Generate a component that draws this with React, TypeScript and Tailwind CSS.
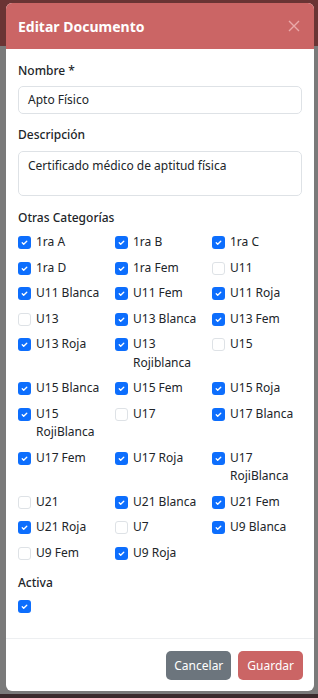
import React from 'react';

type Category = { label: string; checked: boolean };

const categories: Category[] = [
  { label: '1ra A', checked: true },
  { label: '1ra B', checked: true },
  { label: '1ra C', checked: true },
  { label: '1ra D', checked: true },
  { label: '1ra Fem', checked: true },
  { label: 'U11', checked: false },
  { label: 'U11 Blanca', checked: true },
  { label: 'U11 Fem', checked: true },
  { label: 'U11 Roja', checked: true },
  { label: 'U13', checked: false },
  { label: 'U13 Blanca', checked: true },
  { label: 'U13 Fem', checked: true },
  { label: 'U13 Roja', checked: true },
  { label: 'U13 Rojiblanca', checked: true },
  { label: 'U15', checked: false },
  { label: 'U15 Blanca', checked: true },
  { label: 'U15 Fem', checked: true },
  { label: 'U15 Roja', checked: true },
  { label: 'U15 RojiBlanca', checked: true },
  { label: 'U17', checked: false },
  { label: 'U17 Blanca', checked: true },
  { label: 'U17 Fem', checked: true },
  { label: 'U17 Roja', checked: true },
  { label: 'U17 RojiBlanca', checked: true },
  { label: 'U21', checked: false },
  { label: 'U21 Blanca', checked: true },
  { label: 'U21 Fem', checked: true },
  { label: 'U21 Roja', checked: true },
  { label: 'U7', checked: false },
  { label: 'U9 Blanca', checked: true },
  { label: 'U9 Fem', checked: false },
  { label: 'U9 Roja', checked: true },
];

const Check: React.FC<{ checked: boolean }> = ({ checked }) =>
  checked ? (
    <span className="mt-[3px] flex h-[13px] w-[13px] shrink-0 items-center justify-center rounded-[3px] bg-[#0d6efd]">
      <svg width="9" height="9" viewBox="0 0 20 20" fill="none">
        <path d="M5 10.5l3.2 3.2L15 7" stroke="#fff" strokeWidth="3" strokeLinecap="round" strokeLinejoin="round" />
      </svg>
    </span>
  ) : (
    <span className="mt-[3px] h-[13px] w-[13px] shrink-0 rounded-[3px] border border-[#dee2e6] bg-white" />
  );

export default function App() {
  return (
    <div
      className="relative flex h-[698px] w-[318px] flex-col bg-[#7a7a7a] text-[12px] text-[#212529]"
      style={{ fontFamily: '"Noto Sans", "Open Sans", sans-serif' }}
    >
      <div className="h-[46px] bg-[#6a3434]" />
      <div className="flex-1" />
      <div className="h-[4px] bg-[#3a2a2c]" />

      <div className="absolute left-[6px] top-[3px] w-[308px] overflow-hidden rounded-[6px] bg-white">
        <div className="flex h-[46px] items-center justify-between bg-[#cb6565] pl-[12px] pr-[12px]">
          <h2 className="text-[14px] font-bold text-white">Editar Documento</h2>
          <svg width="12" height="12" viewBox="0 0 12 12" className="mr-[2px]">
            <path d="M1 1l10 10M11 1L1 11" stroke="#eaa9a9" strokeWidth="1.4" />
          </svg>
        </div>

        <div className="px-[12px] pb-[17px] pt-[12px]">
          <label className="block leading-[20px] font-medium">Nombre *</label>
          <div className="mt-[5px] flex h-[28px] items-center rounded-[5px] border border-[#dee2e6] px-[9px]">
            Apto Físico
          </div>

          <label className="mt-[11px] block leading-[20px] font-medium">Descripción</label>
          <div className="mt-[6px] h-[45px] rounded-[5px] border border-[#dee2e6] px-[9px] pt-[4px] leading-[19px]">
            Certificado médico de aptitud física
          </div>

          <label className="mt-[12px] block leading-[20px] font-medium">Otras Categorías</label>
          <div className="mt-[5px] grid grid-cols-[97px_97px_1fr] gap-y-[7px]">
            {categories.map((c) => (
              <div key={c.label} className="flex gap-[5px] pr-[4px] leading-[18.5px]">
                <Check checked={c.checked} />
                <span>{c.label}</span>
              </div>
            ))}
          </div>

          <label className="mt-[11px] block leading-[20px] font-medium">Activa</label>
          <div className="mt-[4px] flex h-[24px]">
            <Check checked />
          </div>
        </div>

        <div className="flex justify-end gap-[7px] border-t border-[#edeff1] px-[11px] pb-[11px] pt-[12px]">
          <button className="h-[29px] rounded-[5px] bg-[#6c757d] px-[8px] text-[12px] text-white">Cancelar</button>
          <button className="h-[29px] rounded-[5px] bg-[#cb6565] px-[9px] text-[12px] text-white">Guardar</button>
        </div>
      </div>
    </div>
  );
}
